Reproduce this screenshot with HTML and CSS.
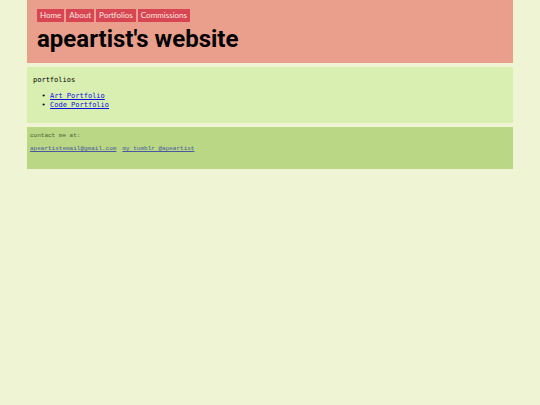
FILE: index.html
```html
<!DOCTYPE html>
<html lang="en">
<head>
    <meta charset="UTF-8">
    <meta name="viewport" content="width=device-width, initial-scale=1.0">
    <title>apeartist's website</title>
    <link rel="stylesheet" href="styles.css">
</head>
<body>

    <header class="header">
        <nav class="navbar">
            <a href="#home">Home</a>
            <a href="#about">About</a>
            <a href="#portfolios">Portfolios</a>
            <a href="#commissions">Commissions</a>
        </nav>
        <h1>apeartist's website</h1>
    </header>

    <main class="content" id="portfolios">
        <h2>portfolios</h2>
        <ul>
            <li><a href="#art">Art Portfolio</a></li>
            <li><a href="#code">Code Portfolio</a></li>
        </ul>
    </main>

    <footer class="footer">
        <p>contact me at:</p>
        <div class="contact">
            <a href="mailto:apeartistemail@gmail.com">apeartistemail@gmail.com</a>
            <a href="#tumblr">my tumblr @apeartist</a>
        </div>
    </footer>

</body>
</html>
```
FILE: styles.css
```css
body {
    width: 90%;
    margin: 0 auto;
    background: #eff4d5;
    font-family: "DejaVu Sans Mono", monospace;
    font-size: 7px;
}

.header {
    margin-bottom: 4px;
    padding: 9px 10px;
    background: #e99f8c;
}

.navbar {
    display: flex;
    flex-wrap: wrap;
    gap: 2px;
}

.navbar a {
    padding: 0 3px;
    background: #d84654;
    color: #fbe6df;
    font-family: Lato, sans-serif;
    font-size: 8px;
    line-height: 13px;
    text-decoration: none;
}

h1 {
    margin: 2px 0 0;
    font-family: Roboto, sans-serif;
    font-size: 24px;
    font-weight: bold;
    line-height: 30px;
}

.content {
    margin-bottom: 4px;
    padding: 9px 6px 13px;
    background: #d9efb2;
}

h2 {
    margin: 0 0 7px;
    font-size: 7px;
    font-weight: normal;
    line-height: 9px;
}

ul {
    margin: 0;
    padding-left: 17px;
    line-height: 9px;
    list-style-type: "• ";
}

.content a {
    color: #0c12d8;
}

.footer {
    padding: 4px 3px 16px;
    background: #b9d784;
    color: #4c5c35;
    font-family: "Liberation Mono", monospace;
    font-size: 6px;
    line-height: 9px;
}

.footer p {
    margin: 0 0 4px;
}

.contact {
    display: flex;
    flex-wrap: wrap;
    gap: 6px;
}

.footer a {
    color: #4a58a0;
}
```
